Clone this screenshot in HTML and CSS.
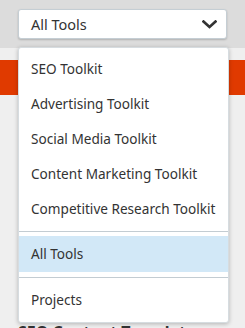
FILE: index.html
```html
<!DOCTYPE html>
<html lang="en">
  <head>
    <meta charset="UTF-8" />
    <meta name="viewport" content="width=device-width, initial-scale=1.0" />
    <title>All Tools</title>
    <link rel="stylesheet" href="styles.css">
  </head>
  <body>
    <div class="topbar">
      <div class="picker">
        <button class="select">
          <span>All Tools</span>
          <svg class="chevron" width="15" height="9" viewBox="0 0 15 9">
            <path d="M1.5 1.5 L7.5 7 L13.5 1.5" fill="none" stroke="#333" stroke-width="2.6" stroke-linecap="square" />
          </svg>
        </button>

        <ul class="menu">
          <li class="item">SEO Toolkit</li>
          <li class="item">Advertising Toolkit</li>
          <li class="item">Social Media Toolkit</li>
          <li class="item">Content Marketing Toolkit</li>
          <li class="item">Competitive Research Toolkit</li>
          <li class="divider"></li>
          <li class="item active">All Tools</li>
          <li class="divider"></li>
          <li class="item">Projects</li>
        </ul>
      </div>
    </div>

    <div class="banner"></div>

    <h2 class="title">SEO Content Template</h2>
  </body>
</html>
```

FILE: styles.css
```css
body {
  margin: 0;
  background-color: #efefef;
  font-family: "Noto Sans", "Open Sans", sans-serif;
  color: #333;
}
.topbar {
  height: 48px;
  background-color: #dcdcdc;
  padding: 9px 18px 0 18px;
  box-sizing: border-box;
}
.picker {
  position: relative;
  width: 209px;
}
.select {
  display: flex;
  align-items: center;
  justify-content: space-between;
  width: 100%;
  height: 30px;
  padding: 0 9px 0 12px;
  background-color: #fff;
  border: 1px solid #c5ced4;
  border-radius: 3px;
  box-shadow: 0 1px 2px rgba(0, 0, 0, 0.2);
  font-family: inherit;
  font-size: 14.5px;
  color: #333;
  box-sizing: border-box;
}
.chevron {
  display: block;
}
.menu {
  position: absolute;
  top: 38px;
  left: 0;
  width: 211px;
  margin: 0;
  padding: 3px 0 5px 0;
  list-style: none;
  background-color: #fff;
  border: 1px solid #d6dce0;
  border-radius: 3px;
  box-shadow: 0 1px 4px rgba(0, 0, 0, 0.25);
  box-sizing: border-box;
}
.item {
  height: 35px;
  line-height: 35px;
  padding-left: 12px;
  font-size: 13.6px;
  white-space: nowrap;
}
.item.active {
  height: 36px;
  line-height: 36px;
  background-color: #d2e8f7;
}
.divider {
  height: 1px;
  margin: 5px 0 4px 0;
  background-color: #c3ccd2;
}
.banner {
  height: 35px;
  margin-top: 12px;
  background-color: #e03a00;
}
.title {
  margin: 226px 0 0 18px;
  font-size: 16px;
  font-weight: bold;
  color: #333;
}
```
